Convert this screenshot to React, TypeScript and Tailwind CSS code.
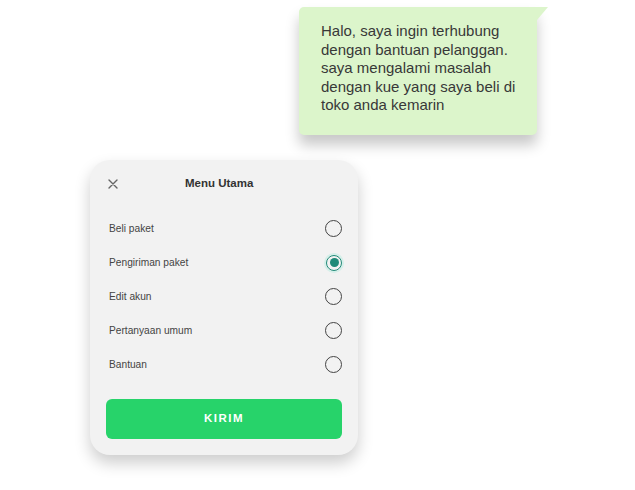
import React from "react";

const items = [
  { label: "Beli paket", checked: false },
  { label: "Pengiriman paket", checked: true },
  { label: "Edit akun", checked: false },
  { label: "Pertanyaan umum", checked: false },
  { label: "Bantuan", checked: false },
];

function Radio({ checked }: { checked: boolean }) {
  if (checked) {
    return (
      <div className="w-[16px] h-[16px] rounded-full border-[1.5px] border-[#1f8a78] flex items-center justify-center shadow-[0_0_0_2px_#d4efe9]">
        <div className="w-[9px] h-[9px] rounded-full bg-[#1f8a78]" />
      </div>
    );
  }
  return <div className="w-[17px] h-[17px] rounded-full border-[1.6px] border-[#444]" />;
}

export default function App() {
  return (
    <div className="w-[635px] h-[490px] bg-white overflow-hidden" style={{ fontFamily: '"Liberation Sans", Arial, sans-serif' }}>
      <div className="pl-[299px] pt-[7px]">
        <div className="relative w-[238px] bg-[#dcf5cb] rounded-[5px] rounded-tr-none pl-[22px] pr-[10px] pt-[15px] pb-[20px] shadow-[0_10px_14px_rgba(0,0,0,0.22)]">
          <svg className="absolute top-0 left-full" width="11" height="13" viewBox="0 0 11 13">
            <path d="M0 0 L11 0 L0 13 Z" fill="#dcf5cb" />
          </svg>
          <p className="text-[15px] leading-[18.6px] text-[#383838]">
            Halo, saya ingin terhubung dengan bantuan pelanggan. saya mengalami masalah dengan kue yang saya beli di toko anda kemarin
          </p>
        </div>
      </div>
      <div className="pl-[90px] pt-[25px]">
        <div className="w-[268px] bg-[#f2f2f2] rounded-[20px] px-[16px] pb-[16px] pt-[17px] shadow-[0_8px_16px_rgba(0,0,0,0.2)]">
          <div className="flex items-center h-[14px]">
            <svg width="10" height="10" viewBox="0 0 10 10" className="ml-[2px]">
              <path d="M1 1 L9 9 M9 1 L1 9" stroke="#666" strokeWidth="1.4" strokeLinecap="round" />
            </svg>
            <div className="ml-[67px] text-[11.5px] font-bold text-[#333]">Menu Utama</div>
          </div>
          <div className="mt-[21px] flex flex-col">
            {items.map((it) => (
              <div key={it.label} className="flex items-center justify-between h-[34px] pl-[3px] pr-[0px]">
                <span className="text-[10.2px] text-[#444]">{it.label}</span>
                <Radio checked={it.checked} />
              </div>
            ))}
          </div>
          <button className="mt-[17px] w-full h-[40px] rounded-[6px] bg-[#27d36a] text-white text-[11.5px] font-bold tracking-[1.5px]">
            KIRIM
          </button>
        </div>
      </div>
    </div>
  );
}
